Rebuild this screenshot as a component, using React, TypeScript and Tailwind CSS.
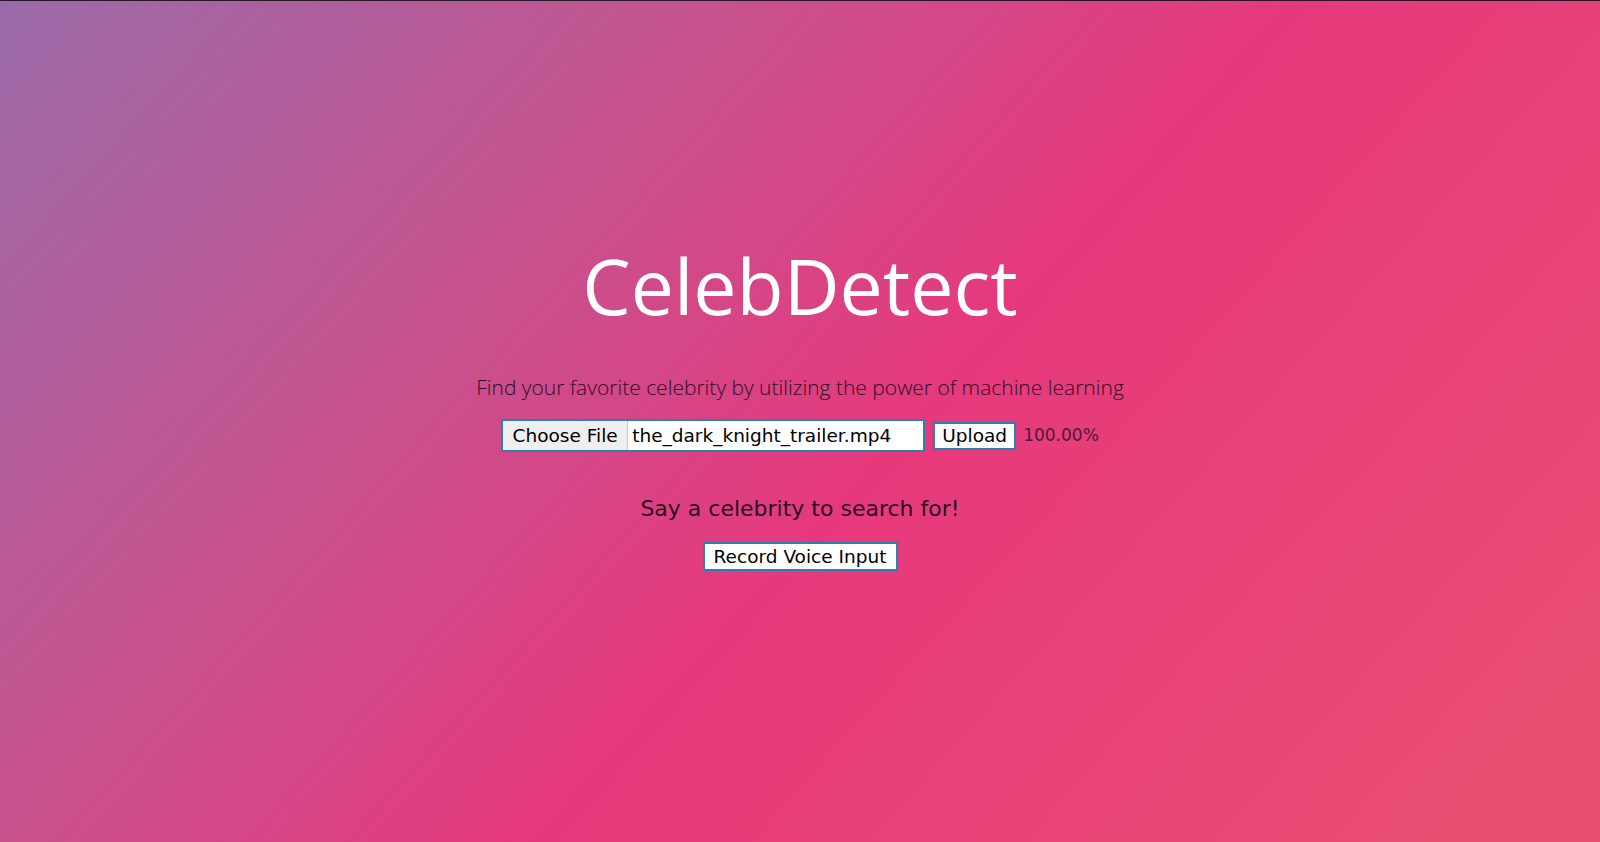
export default function App() {
  return (
    <div className="min-h-[842px] w-full border-t border-[#2a1628] bg-[linear-gradient(132deg,#9a6aa8_0%,#c5538f_30%,#e6397c_55%,#e9506f_100%)] font-['Open_Sans',sans-serif]">
      <div className="flex flex-col items-center pt-[246px]">
        <h1 className="text-[77px] leading-none font-normal text-white">CelebDetect</h1>

        <p className="mt-[50px] text-[21px] leading-[26px] font-light text-[#2e0f28]">
          Find your favorite celebrity by utilizing the power of machine learning
        </p>

        <div className="mt-[19px] flex items-center font-['DejaVu_Sans',sans-serif] text-[18.5px]">
          <div className="flex h-[33px] w-[424px] items-stretch border-2 border-[#2a7fb3] bg-white text-black">
            <span className="flex w-[125px] items-center justify-center border-r border-[#c8c8c8] bg-[#efefef]">
              Choose File
            </span>
            <span className="flex items-center pl-[4px]">the_dark_knight_trailer.mp4</span>
          </div>
          <button className="ml-[8px] flex h-[28px] w-[83px] items-center justify-center border-2 border-[#2a7fb3] bg-white text-black">
            Upload
          </button>
          <span className="ml-[7px] text-[17px] text-[#4b1b3c]">100.00%</span>
        </div>

        <h2 className="mt-[43px] font-['DejaVu_Sans',sans-serif] text-[22px] leading-[28px] font-normal text-[#2b0d22]">
          Say a celebrity to search for!
        </h2>

        <button className="mt-[19px] flex h-[29px] w-[195px] items-center justify-center border-2 border-[#2a7fb3] bg-white font-['DejaVu_Sans',sans-serif] text-[18.5px] text-black">
          Record Voice Input
        </button>
      </div>
    </div>
  );
}
